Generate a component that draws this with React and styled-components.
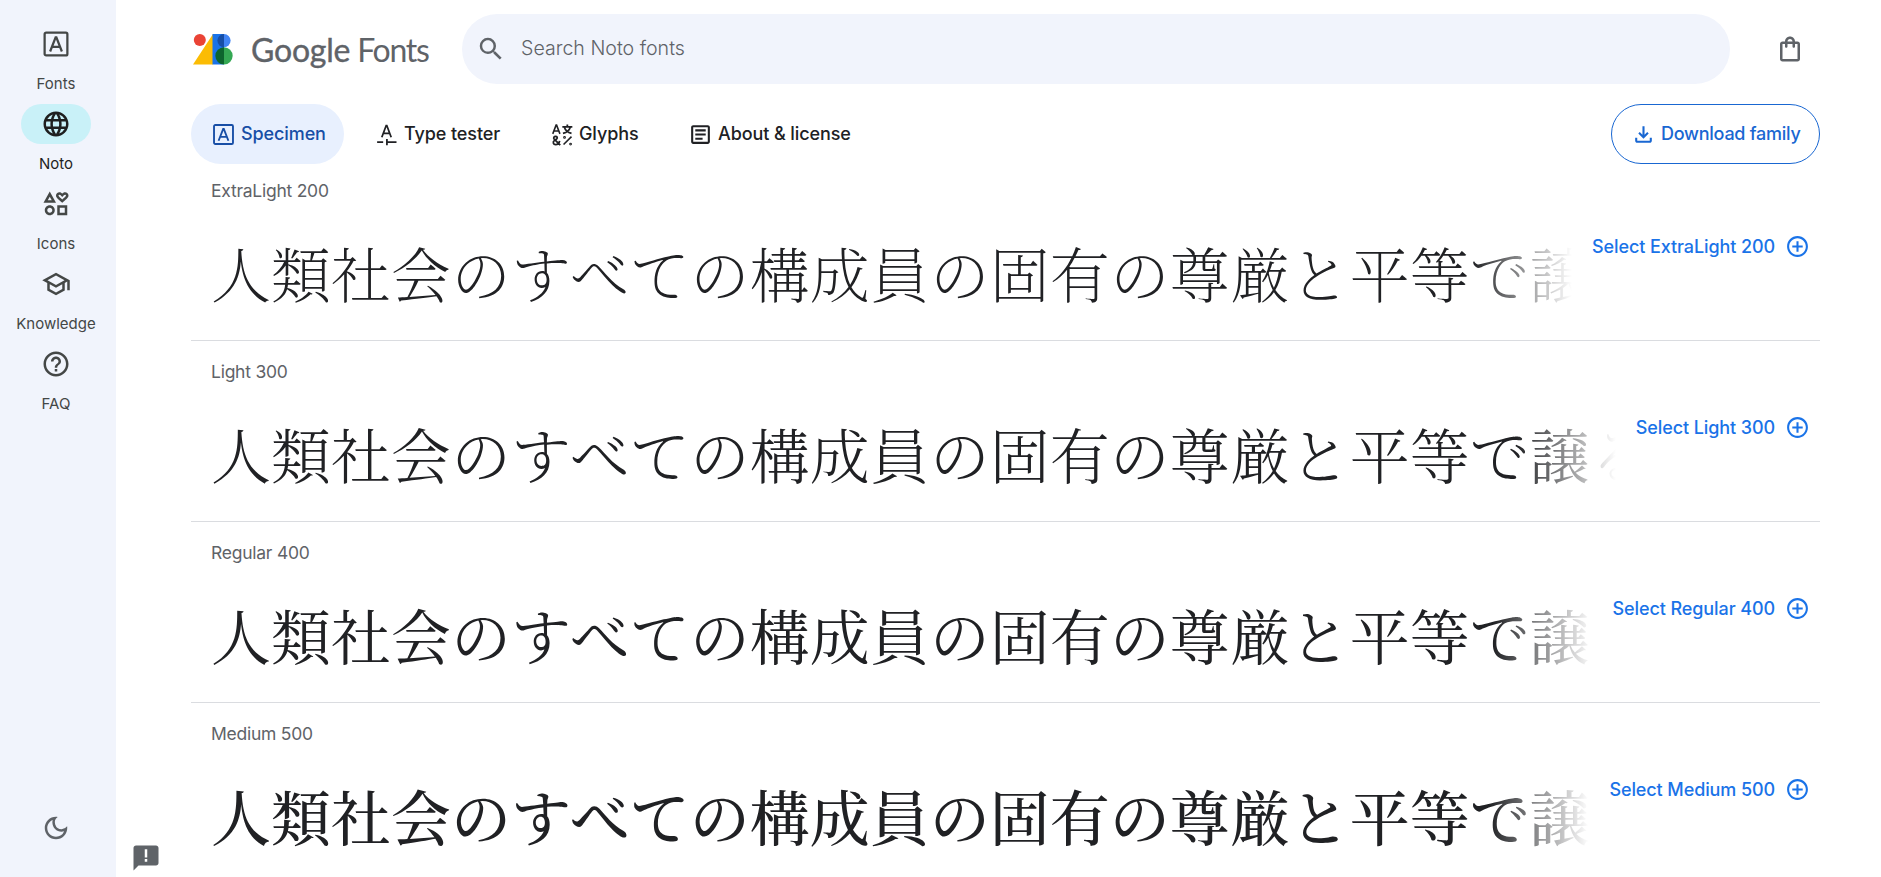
import React, { useState } from 'react'
import styled, { createGlobalStyle, css } from 'styled-components'
import {
  MdLanguage,
  MdOutlineInterests,
  MdOutlineSchool,
  MdHelpOutline,
  MdOutlineDarkMode,
  MdSearch,
  MdOutlineShoppingBag,
  MdOutlineArticle,
  MdOutlineFileDownload,
  MdAddCircleOutline,
} from 'react-icons/md'

const SAMPLE = '人類社会のすべての構成員の固有の尊厳と平等で譲る'

function Logo() {
  return (
    <svg width="40" height="31" viewBox="0 0 40 31">
      <path d="M20 0v30.5H0z" fill="#fbbc04" />
      <circle cx="6.8" cy="6.1" r="6" fill="#ea4335" />
      <path d="M19.5 0h11.5v30.5H19.5z" fill="#1a73e8" />
      <path d="M31 0a6.6 6.6 0 0 1 0 13.2z" fill="#4285f4" />
      <path d="M31 0a6.6 6.6 0 0 0 0 13.2z" fill="#174ea6" />
      <path d="M31 13.2a8.65 8.65 0 0 1 0 17.3z" fill="#34a853" />
      <path d="M31 13.2a8.65 8.65 0 0 0 0 17.3z" fill="#0d652d" />
    </svg>
  )
}

function SpecimenIcon({ size }) {
  return (
    <svg viewBox="0 0 24 24" width={size} height={size} fill="none" stroke="currentColor" strokeWidth="1.8">
      <rect x="2.9" y="2.9" width="18.2" height="18.2" rx="1.2" />
      <path d="M7.3 18 11.7 6.6h.6L16.7 18M8.9 14.3h6.2" />
    </svg>
  )
}

function TesterIcon({ size }) {
  return (
    <svg viewBox="0 0 24 24" width={size} height={size} fill="none" stroke="currentColor" strokeWidth="1.7">
      <path d="M7.5 14.6 11.7 3.4h.6l4.2 11.2M9 10.9h6" />
      <path d="M3 19.4h5.8M12.4 16.4v6M12.4 19.4h9.2" />
    </svg>
  )
}

function GlyphsIcon({ size }) {
  return (
    <svg viewBox="0 0 24 24" width={size} height={size} fill="none" stroke="currentColor" strokeWidth="1.7">
      <path strokeWidth="1.5" d="M3.6 11.4 6.8 3h.5l3.2 8.4M4.8 8.6h4.5" />
      <path d="M12.8 4.6h9.6M17.6 2.4v2.2M14.8 5c.8 2.8 3.2 5 6.8 6M20.4 5c-.8 2.8-3.2 5-7 6" />
      <path d="M10.8 22.2 5 16.4c-1.1-1.4-.1-2.6 1.3-2.6s2.3 1.4 1 2.5l-2.2 1.6c-1.8 1.4-.9 3.8 1.2 3.8 2 0 3.5-1.4 3.9-3.6" />
      <path strokeWidth="1.5" d="m14 21.6 7.6-7.6" />
      <circle cx="14.9" cy="14.8" r=".5" />
      <circle cx="20.7" cy="21.2" r=".5" />
    </svg>
  )
}

function FeedbackIcon() {
  return (
    <svg viewBox="0 0 24 24" width="30" height="30" fill="currentColor">
      <path
        fillRule="evenodd"
        d="M20 2H4c-1.1 0-2 .9-2 2v18l4-4h14c1.1 0 2-.9 2-2V4c0-1.1-.9-2-2-2zm-9 3h2v6.6h-2zm0 7.8h2v2.1h-2z"
      />
    </svg>
  )
}

const navItems = [
  { name: 'Fonts', icon: SpecimenIcon },
  { name: 'Noto', icon: MdLanguage },
  { name: 'Icons', icon: MdOutlineInterests },
  { name: 'Knowledge', icon: MdOutlineSchool },
  { name: 'FAQ', icon: MdHelpOutline },
]

const tabs = [
  { name: 'Specimen', icon: SpecimenIcon, width: 153 },
  { name: 'Type tester', icon: TesterIcon, width: 165 },
  { name: 'Glyphs', icon: GlyphsIcon, width: 129 },
  { name: 'About & license', icon: MdOutlineArticle, width: 203 },
]

const styles = [
  { name: 'ExtraLight', weight: 200 },
  { name: 'Light', weight: 300 },
  { name: 'Regular', weight: 400 },
  { name: 'Medium', weight: 500 },
]

function App() {
  const [tab, setTab] = useState('Specimen')

  return (
    <Page>
      <GlobalStyle />
      <Sidebar>
        {navItems.map(({ name, icon: Icon }) => (
          <NavItem key={name} href="#" $active={name === 'Noto'}>
            <NavPill $active={name === 'Noto'}><Icon size={30} /></NavPill>
            <span>{name}</span>
          </NavItem>
        ))}
        <ThemeButton aria-label="Toggle theme"><MdOutlineDarkMode size={30} /></ThemeButton>
      </Sidebar>

      <Main>
        <Header>
          <Brand href="#">
            <Logo />
            <BrandName><b>Google</b> Fonts</BrandName>
          </Brand>
          <SearchBar>
            <MdSearch size={30} />
            <input placeholder="Search Noto fonts" />
          </SearchBar>
          <BagButton aria-label="Selected families"><MdOutlineShoppingBag size={30} /></BagButton>
        </Header>

        <TabBar>
          {tabs.map(({ name, icon: Icon, width }) => (
            <Tab key={name} $active={name === tab} $width={width} onClick={() => setTab(name)}>
              <Icon size={25} />
              <span>{name}</span>
            </Tab>
          ))}
          <Download>
            <MdOutlineFileDownload size={25} />
            <span>Download family</span>
          </Download>
        </TabBar>

        <StyleList>
          {styles.map(({ name, weight }) => (
            <StyleRow key={weight}>
              <StyleName>{name} {weight}</StyleName>
              <SampleLine>
                <Sample $weight={weight} lang="ja">{SAMPLE}</Sample>
                <Select>
                  <span>Select {name} {weight}</span>
                  <MdAddCircleOutline size={25} />
                </Select>
              </SampleLine>
            </StyleRow>
          ))}
        </StyleList>
      </Main>

      <Feedback aria-label="Send feedback"><FeedbackIcon /></Feedback>
    </Page>
  )
}

export default App

const GlobalStyle = createGlobalStyle`
  * {
    box-sizing: border-box;
  }
  body {
    margin: 0;
    overflow: hidden;
    background: #fff;
    color: #202124;
    font-family: Inter, Roboto, sans-serif;
  }
  button, input {
    font: inherit;
    color: inherit;
    border: 0;
    padding: 0;
    background: none;
  }
  svg {
    display: block;
    flex: none;
  }
`

const Page = styled.div`
  display: flex;
  height: 877px;
  overflow: hidden;
`

const Sidebar = styled.nav`
  width: 116px;
  flex: none;
  display: flex;
  flex-direction: column;
  padding: 24px 4px 34px 0;
  background: #f1f4fc;
`

const NavItem = styled.a`
  height: 80px;
  display: flex;
  flex-direction: column;
  align-items: center;
  text-decoration: none;
  font-size: 15px;
  line-height: 20px;
  color: ${props => props.$active ? '#1f1f1f' : '#444746'};

  span {
    margin-top: 10px;
  }
`

const NavPill = styled.div`
  width: 70px;
  height: 40px;
  display: flex;
  align-items: center;
  justify-content: center;
  border-radius: 20px;
  background: ${props => props.$active ? '#c9f1f8' : 'transparent'};
`

const ThemeButton = styled.button`
  margin: auto auto 0;
  color: #5f6368;
`

const Main = styled.main`
  flex: 1;
  min-width: 0;
  display: flex;
  flex-direction: column;
  padding: 14px 61px 0 75px;
`

const Header = styled.header`
  display: flex;
  align-items: center;
  height: 70px;
`

const Brand = styled.a`
  width: 271px;
  display: flex;
  align-items: center;
  gap: 18px;
  padding-left: 2px;
  text-decoration: none;
`

const BrandName = styled.span`
  padding-top: 2px;
  font-family: Lato, sans-serif;
  font-size: 32px;
  line-height: 40px;
  letter-spacing: -1.3px;
  white-space: nowrap;
  color: #5f6368;

  b {
    font-weight: 400;
    letter-spacing: -0.2px;
    -webkit-text-stroke: 0.4px #5f6368;
  }
`

const SearchBar = styled.label`
  width: 1268px;
  height: 70px;
  display: flex;
  align-items: center;
  gap: 15px;
  padding-left: 14px;
  border-radius: 35px;
  background: #f1f4fc;
  color: #5f6368;

  input {
    flex: 1;
    padding-bottom: 2px;
    outline: none;
    font-size: 19.6px;
    font-weight: 300;
  }
  input::placeholder {
    color: #5f6368;
    opacity: 1;
  }
`

const BagButton = styled.button`
  margin-left: auto;
  margin-right: 15px;
  color: #5f6368;
`

const TabBar = styled.div`
  display: flex;
  gap: 10px;
  margin-top: 20px;
`

const button = css`
  height: 60px;
  display: flex;
  align-items: center;
  gap: 5px;
  padding: 0 20px;
  border-radius: 30px;
  font-size: 18px;
  font-weight: 450;
  white-space: nowrap;

  span {
    padding-bottom: 1px;
  }
`

const Tab = styled.button`
  ${button}
  width: ${props => props.$width}px;
  letter-spacing: -0.1px;
  background: ${props => props.$active ? '#e8f0fe' : 'transparent'};
  color: ${props => props.$active ? '#174ea6' : '#202124'};
`

const Download = styled.button`
  ${button}
  width: 209px;
  margin-left: auto;
  padding: 0 19px;
  letter-spacing: -0.25px;
  border: 1px solid #1967d2;
  color: #1967d2;
`

const StyleList = styled.section`
  /* the first row slides under the tab bar */
  margin-top: -4px;
`

const StyleRow = styled.article`
  height: 181px;
  padding: 19px 10px 0 20px;
  border-bottom: 1px solid #dadce0;
`

const StyleName = styled.div`
  font-size: 17.5px;
  line-height: 24px;
  letter-spacing: -0.25px;
  color: #5f6368;
`

const SampleLine = styled.div`
  display: flex;
  align-items: flex-start;
  gap: 20px;
  margin-top: 31px;
`

const Sample = styled.div`
  flex: 1;
  min-width: 0;
  overflow: hidden;
  font-family: 'Noto Serif CJK JP', 'Noto Serif JP', 'Noto Sans CJK JP', serif;
  font-size: 60px;
  font-weight: ${props => props.$weight};
  line-height: 76px;
  white-space: nowrap;
  mask-image: linear-gradient(to left, transparent, #000 100px);
`

const Select = styled.button`
  display: flex;
  align-items: center;
  gap: 10px;
  font-size: 18px;
  font-weight: 450;
  line-height: 25px;
  letter-spacing: -0.1px;
  color: #1a73e8;
  white-space: nowrap;
`

const Feedback = styled.button`
  position: fixed;
  left: 131px;
  bottom: 4px;
  color: #5f6368;
`
